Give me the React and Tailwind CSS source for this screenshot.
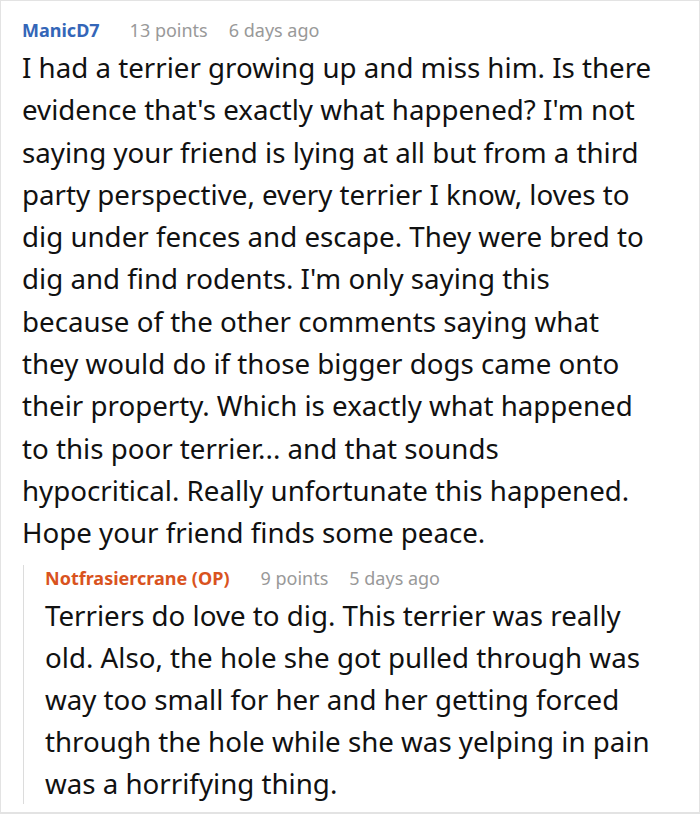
export default function App() {
  return (
    <div className="w-[700px] h-[814px] bg-white border border-b-2 border-[#e3e3e3] overflow-hidden" style={{ fontFamily: '"Noto Sans", sans-serif' }}>
      <div className="pl-[21px] pr-[40px] pt-[15px]">
        <div className="flex items-baseline text-[18px] leading-[28px]">
          <span className="font-bold text-[#3466b8]">ManicD7</span>
          <span className="ml-[30px] text-[#999]">13 points</span>
          <span className="ml-[21px] text-[#999]">6 days ago</span>
        </div>
        <p className="text-[27.7px] leading-[42.3px] text-[#111] mt-[2px]">
          I had a terrier growing up and miss him. Is there evidence that's exactly what happened? I'm not saying your friend is lying at all but from a third party perspective, every terrier I know, loves to dig under fences and escape. They were bred to dig and find rodents. I'm only saying this because of the other comments saying what they would do if those bigger dogs came onto their property. Which is exactly what happened to this poor terrier... and that sounds hypocritical. Really unfortunate this happened. Hope your friend finds some peace.
        </p>
        <div className="mt-[11px] ml-[1px] border-l border-[#dcdcdc] pl-[21px]">
          <div className="flex items-baseline text-[18px] leading-[26px]">
            <span className="font-bold text-[#d9531e]">Notfrasiercrane (OP)</span>
            <span className="ml-[31px] text-[#999]">9 points</span>
            <span className="ml-[21px] text-[#999]">5 days ago</span>
          </div>
          <p className="text-[27.7px] leading-[42px] text-[#111] mt-[3px] pr-[1px]">
            Terriers do love to dig. This terrier was really old. Also, the hole she got pulled through was way too small for her and her getting forced through the hole while she was yelping in pain was a horrifying thing.
          </p>
        </div>
      </div>
    </div>
  );
}
